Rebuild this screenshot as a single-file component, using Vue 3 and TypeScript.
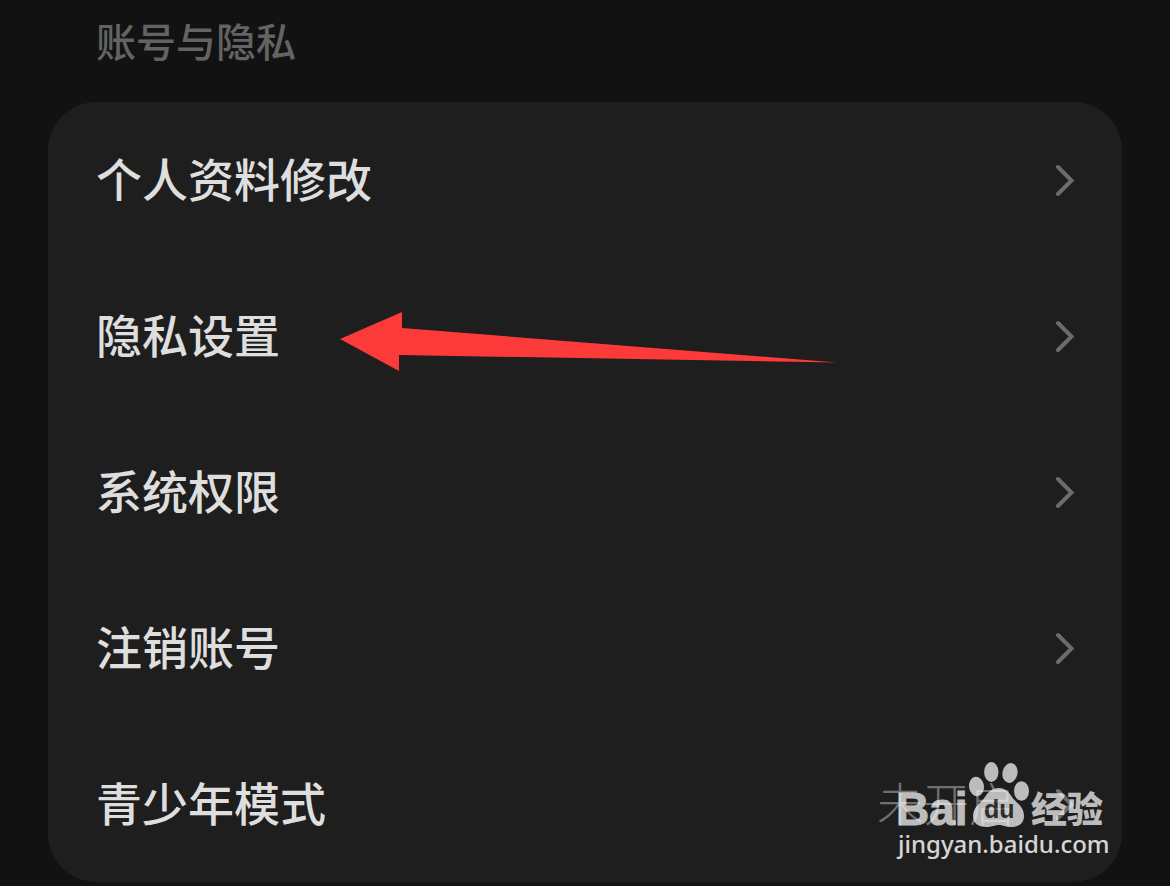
<script setup lang="ts">
interface SettingItem {
  label: string
  value?: string
  pointed?: boolean
}

const items: SettingItem[] = [
  { label: '个人资料修改' },
  { label: '隐私设置', pointed: true },
  { label: '系统权限' },
  { label: '注销账号' },
  { label: '青少年模式', value: '未开启' },
]
</script>

<template>
  <main class="page">
    <h2 class="heading">账号与隐私</h2>
    <section class="card">
      <ul class="list">
        <li v-for="item in items" :key="item.label" class="item">
          <button type="button" class="row">
            <span class="label">{{ item.label }}</span>
            <span v-if="item.value" class="value">{{ item.value }}</span>
            <svg class="chevron" viewBox="0 0 20 32" aria-hidden="true">
              <path d="M3 3 L16.500 16.500 L3 30" />
            </svg>
          </button>
          <svg v-if="item.pointed" class="arrow" viewBox="0 0 497 60" aria-hidden="true">
            <path d="M0 27 L62 0 V16 L497 50.500 L59 43 V59 Z" />
          </svg>
        </li>
      </ul>
      <svg class="watermark" viewBox="0 0 220 110" role="img" aria-label="Baidu 经验">
        <g class="logo">
          <text class="brand" x="6" y="69">Bai</text>
          <ellipse cx="86.500" cy="30.500" rx="7.500" ry="9.800" transform="rotate(-8 86.500 30.500)" />
          <ellipse cx="101.300" cy="16" rx="7.200" ry="10" />
          <ellipse cx="120" cy="17" rx="7.500" ry="10" transform="rotate(12 120 17)" />
          <ellipse cx="131.500" cy="35" rx="7.500" ry="9.800" />
          <path d="M109 32 C115 32 119 36 122 41 C126 47 134 50 134 60 C134 68 128 71 121 71 C115 71 113 69 109 69 C105 69 102 71 96 71 C88 71 83 67 83 60 C83 51 91 47 95 41 C98 36 102 32 109 32 Z" />
          <text class="du" x="94" y="62">du</text>
          <text class="product" x="141" y="67">经验</text>
        </g>
        <text class="domain" x="8" y="97">jingyan.baidu.com</text>
      </svg>
    </section>
  </main>
</template>

<style>
html,
body {
  margin: 0;
  background: #121212;
}
</style>

<style scoped>
.page {
  box-sizing: border-box;
  min-height: 100vh;
  padding: 14px 48px 4px;
  background: #121212;
  font-family: "Noto Sans CJK SC", "Noto Sans", sans-serif;
}

.heading {
  margin: 0 0 36px;
  padding: 0 48px;
  font-size: 40px;
  line-height: 52px;
  font-weight: 500;
  color: #636363;
}

.card {
  position: relative;
  border-radius: 48px;
  background: #1e1e1e;
}

.list {
  margin: 0;
  padding: 0;
  list-style: none;
}

.item {
  position: relative;
}

.row {
  display: flex;
  align-items: center;
  width: 100%;
  height: 156px;
  padding: 0 47px 0 48px;
  border: 0;
  background: transparent;
  font-family: inherit;
  font-size: 46px;
  line-height: 64px;
  text-align: left;
  color: #dedede;
  cursor: pointer;
}

.label,
.value {
  padding-bottom: 6px;
}

.label {
  flex: 1;
  font-weight: 500;
}

.value {
  margin-right: 40px;
  font-weight: 300;
  color: #707070;
}

.chevron {
  width: 20px;
  height: 32px;
  fill: none;
  stroke: #6c6c6c;
  stroke-width: 4;
  stroke-linecap: round;
}

.arrow {
  position: absolute;
  left: 292px;
  top: 54px;
  width: 497px;
  height: 60px;
  fill: #fd3a3a;
  pointer-events: none;
}

.watermark {
  position: absolute;
  right: 12px;
  bottom: 16px;
  width: 220px;
  height: 110px;
  fill: #ffffff;
  pointer-events: none;
}

.logo {
  opacity: 0.7;
}

.brand,
.du {
  font-family: "Liberation Sans", Arial, sans-serif;
  font-weight: 700;
}

.brand {
  font-size: 46px;
  stroke: #ffffff;
  stroke-width: 1;
}

.du {
  font-size: 25px;
  fill: #333333;
}

.product {
  font-size: 36px;
  font-weight: 900;
}

.domain {
  font-family: "Noto Sans", "Open Sans", sans-serif;
  font-size: 24px;
  font-weight: 500;
  opacity: 0.82;
}
</style>
